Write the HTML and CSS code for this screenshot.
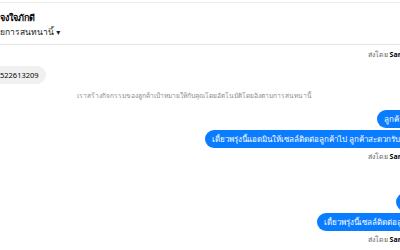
FILE: index.html
```html
<!DOCTYPE html>
<html lang="th">
<head>
    <meta charset="UTF-8">
    <meta name="viewport" content="width=device-width, initial-scale=1.0">
    <title>แชท</title>
    <link rel="stylesheet" href="styles.css">
</head>
<body>
    <div class="page">
        <div class="header">
            <div class="name">จงใจภักดี</div>
            <div class="sub">ยการสนทนานี้ <span class="caret">▾</span></div>
        </div>

        <div class="chat">
            <div class="meta">ส่งโดย <b>Sarawut Jongjaipakdee</b></div>

            <div class="row in">
                <div class="bubble gray">522613209</div>
            </div>

            <div class="notice">เราสร้างกิจกรรมของลูกค้าเป้าหมายให้กับคุณโดยอัตโนมัติโดยอิงตามการสนทนานี้</div>

            <div class="row out first">
                <div class="bubble blue">ลูกค้าสนใจรถรุ่นนี้มากๆ</div>
            </div>
            <div class="row out">
                <div class="bubble blue">เดี๋ยวพรุ่งนี้แอดมินให้เซลล์ติดต่อลูกค้าไป ลูกค้าสะดวกรับสายช่วงไหนบ้างคะ</div>
            </div>
            <div class="meta">ส่งโดย <b>Sarawut Jongjaipakdee</b></div>

            <div class="row out group">
                <div class="bubble blue">ได้เลยค่ะ ขอบคุณ</div>
            </div>
            <div class="row out">
                <div class="bubble blue">เดี๋ยวพรุ่งนี้เซลล์ติดต่อลูกค้านะคะ ขอบคุณ</div>
            </div>
            <div class="meta">ส่งโดย <b>Sarawut Jongjaipakdee</b></div>
        </div>
    </div>
</body>
</html>
```

FILE: styles.css
```css
body {
    margin: 0;
    font-family: "Noto Sans", "DejaVu Sans", sans-serif;
    background-color: #fff;
    color: #050505;
}
.page {
    width: 400px;
    height: 250px;
    overflow: hidden;
}
.header {
    margin-top: 2px;
    border-top: 1px solid #ededed;
    border-bottom: 1px solid #e6e6e6;
    padding: 8px 0 5px;
    height: 28px;
}
.name {
    font-size: 9px;
    font-weight: bold;
    line-height: 14px;
}
.sub {
    font-size: 8.5px;
    line-height: 14px;
    color: #1c1e21;
}
.caret {
    font-size: 8px;
}
.chat {
    margin-right: -70px;
    display: flex;
    flex-direction: column;
}
.meta {
    align-self: flex-end;
    font-size: 7px;
    color: #65676b;
    line-height: 10px;
    margin-top: 4px;
    white-space: nowrap;
}
.meta:first-child {
    margin-top: 5px;
}
.meta b {
    color: #050505;
}
.row {
    display: flex;
    margin-top: 2px;
}
.row.out {
    justify-content: flex-end;
}
.row.first {
    margin-top: 9px;
}
.row.group {
    margin-top: 31px;
}
.bubble {
    font-size: 8px;
    line-height: 18px;
    padding: 0 7px;
    border-radius: 9px;
    white-space: nowrap;
}
.bubble.gray {
    background-color: #f0f0f0;
    font-size: 7.5px;
    margin: 4px 0 0 -10px;
    padding-left: 10px;
}
.bubble.blue {
    background-color: #0a7cff;
    color: #fff;
}
.notice {
    width: 388px;
    text-align: center;
    font-size: 6.6px;
    line-height: 10px;
    color: #8a8d91;
    margin-top: 7px;
    white-space: nowrap;
}
```
